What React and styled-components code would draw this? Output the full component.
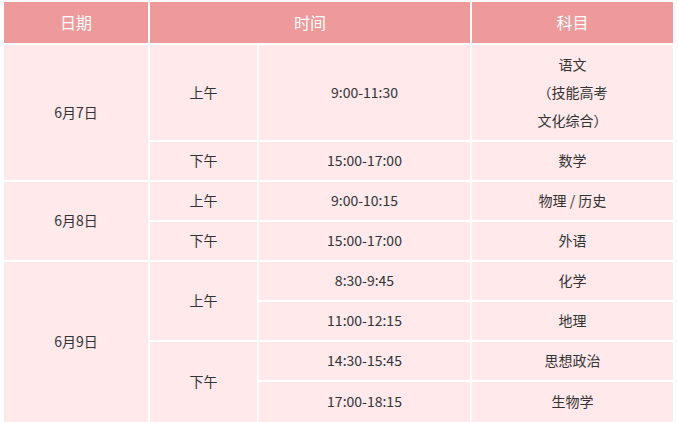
import styled, { createGlobalStyle } from 'styled-components';

const GlobalStyle = createGlobalStyle`
  body {
    margin: 0;
    background: #ffffff;
    font-family: "Noto Sans CJK SC", "Microsoft YaHei", sans-serif;
  }
`;

const Table = styled.div`
  display: grid;
  grid-template-columns: 144px 107px 211px 201px;
  grid-template-rows: 41px 95px 38px 38px 38px 38px 38px 38px 40px;
  gap: 2px;
  margin: 2px 0 0 4px;
  width: 669px;
  background: #ffffff;
`;

const HeadCell = styled.div`
  grid-column: ${(p) => p.$col};
  display: flex;
  align-items: center;
  justify-content: center;
  padding-bottom: 2px;
  background: #ee9a9b;
  color: #ffffff;
  font-size: 16px;
`;

const Cell = styled.div`
  grid-column: ${(p) => p.$col};
  grid-row: ${(p) => p.$row};
  display: flex;
  flex-direction: column;
  align-items: center;
  justify-content: center;
  padding-bottom: 2px;
  background: #ffe9eb;
  color: #333333;
  font-size: 14px;
  line-height: 28px;
  text-align: center;
`;

const rows = [
  { row: 2, time: '9:00-11:30', subject: ['语文', '（技能高考', '文化综合）'] },
  { row: 3, time: '15:00-17:00', subject: ['数学'] },
  { row: 4, time: '9:00-10:15', subject: ['物理 / 历史'] },
  { row: 5, time: '15:00-17:00', subject: ['外语'] },
  { row: 6, time: '8:30-9:45', subject: ['化学'] },
  { row: 7, time: '11:00-12:15', subject: ['地理'] },
  { row: 8, time: '14:30-15:45', subject: ['思想政治'] },
  { row: 9, time: '17:00-18:15', subject: ['生物学'] },
];

const dates = [
  { label: '6月7日', row: '2 / 4' },
  { label: '6月8日', row: '4 / 6' },
  { label: '6月9日', row: '6 / 10' },
];

const periods = [
  { label: '上午', row: '2' },
  { label: '下午', row: '3' },
  { label: '上午', row: '4' },
  { label: '下午', row: '5' },
  { label: '上午', row: '6 / 8' },
  { label: '下午', row: '8 / 10' },
];

const App = () => {
  return (
    <>
      <GlobalStyle />
      <Table>
        <HeadCell $col="1">日期</HeadCell>
        <HeadCell $col="2 / 4">时间</HeadCell>
        <HeadCell $col="4">科目</HeadCell>

        {dates.map((d) => (
          <Cell key={d.label} $col="1" $row={d.row}>{d.label}</Cell>
        ))}
        {periods.map((p) => (
          <Cell key={p.row} $col="2" $row={p.row}>{p.label}</Cell>
        ))}
        {rows.map((r) => (
          <Cell key={'t' + r.row} $col="3" $row={r.row}>{r.time}</Cell>
        ))}
        {rows.map((r) => (
          <Cell key={'s' + r.row} $col="4" $row={r.row}>
            {r.subject.map((line) => (
              <span key={line}>{line}</span>
            ))}
          </Cell>
        ))}
      </Table>
    </>
  );
};

export default App;
